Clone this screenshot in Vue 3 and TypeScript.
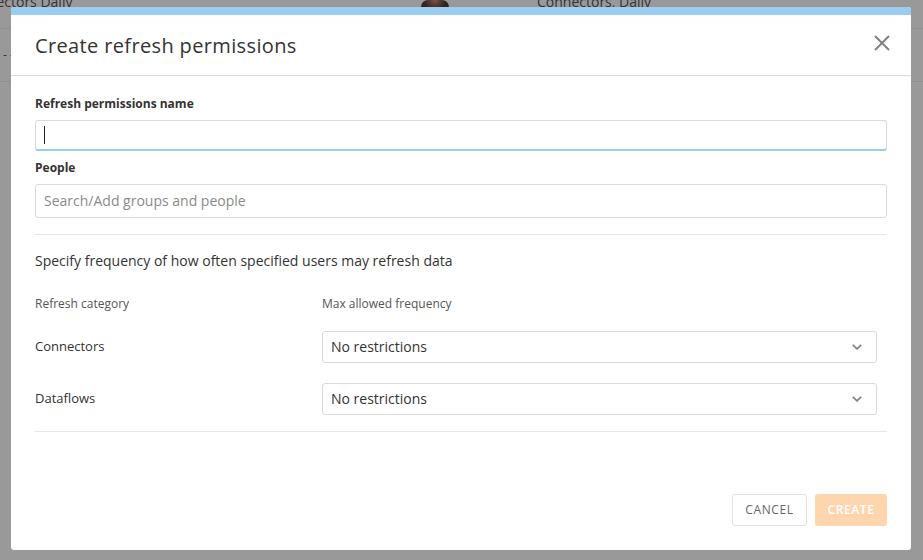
<script setup lang="ts">
const rows: { label: string; value: string }[] = [
  { label: 'Connectors', value: 'No restrictions' },
  { label: 'Dataflows', value: 'No restrictions' },
]
</script>

<template>
  <div class="page">
    <div class="backdrop">
      <div class="bg-row bg-first">
        <span class="bg-a">Connectors Daily</span>
        <span class="avatar"></span>
        <span class="bg-b">Connectors, Daily</span>
      </div>
      <div class="bg-row bg-second"><span class="dash">- -</span></div>
    </div>
    <div class="modal">
      <div class="accent"></div>
      <header class="head">
        <h1 class="title">Create refresh permissions</h1>
        <svg class="close" width="16" height="16" viewBox="0 0 16 16" aria-hidden="true">
          <path d="M1 1 L15 15 M15 1 L1 15" stroke="#7f7f7f" stroke-width="1.9" fill="none" />
        </svg>
      </header>
      <div class="body">
        <label class="label first">Refresh permissions name</label>
        <div class="input focused"><span class="caret"></span></div>
        <label class="label second">People</label>
        <div class="input"><span class="placeholder">Search/Add groups and people</span></div>
        <div class="rule rule-a"></div>
        <p class="lead">Specify frequency of how often specified users may refresh data</p>
        <div class="grid-head">
          <span>Refresh category</span>
          <span>Max allowed frequency</span>
        </div>
        <div v-for="row in rows" :key="row.label" class="grid-row">
          <span class="row-label">{{ row.label }}</span>
          <div class="select">
            <span class="value">{{ row.value }}</span>
            <svg class="chev" width="10" height="6" viewBox="0 0 10 6" aria-hidden="true">
              <path d="M0.8 0.8 L5 4.8 L9.2 0.8" stroke="#7f7f7f" stroke-width="1.6" fill="none" />
            </svg>
          </div>
        </div>
        <div class="rule rule-b"></div>
      </div>
      <footer class="foot">
        <button class="btn cancel" type="button">CANCEL</button>
        <button class="btn create" type="button">CREATE</button>
      </footer>
    </div>
  </div>
</template>

<style>
html, body { margin: 0; padding: 0; background: #999; }
</style>

<style scoped>
.page {
  position: relative;
  width: 923px;
  height: 560px;
  overflow: hidden;
  background: #999;
  font-family: "Open Sans", "Liberation Sans", sans-serif;
  color: #333;
}
.backdrop { position: relative; height: 100%; }
.bg-row { border-bottom: 1px solid #8f8f8f; box-sizing: border-box; font-size: 14px; color: #333; }
.bg-first { height: 29px; display: flex; position: relative; }
.bg-second { height: 53px; display: flex; align-items: center; }
.bg-a { margin: -8px 0 0 -38px; width: 459px; white-space: nowrap; }
.avatar {
  width: 28px;
  height: 7px;
  background: radial-gradient(circle at 50% 0, #7a5548 0, #5a3d33 30%, #2c2523 70%);
  border-radius: 11px 11px 0 0;
  margin-right: 88px;
}
.bg-b { margin-top: -8px; white-space: nowrap; }
.dash { margin: -2px 0 0 3px; font-size: 12px; }
.modal {
  position: absolute;
  left: 11px;
  top: 7px;
  width: 900px;
  height: 543px;
  background: #fff;
  border-radius: 3px;
  overflow: hidden;
  display: flex;
  flex-direction: column;
}
.accent { height: 8px; background: #99ccee; flex: none; }
.head {
  height: 60px;
  flex: none;
  box-sizing: content-box;
  border-bottom: 1px solid #d9d9d9;
  display: flex;
  align-items: center;
  justify-content: space-between;
  padding: 0 21px 0 24px;
}
.title { margin: 0; font-size: 20px; letter-spacing: 0.36px; font-weight: 400; color: #333; line-height: 28px; position: relative; top: 1px; }
.close { flex: none; margin-bottom: 4px; }
.body { padding: 0 24px; flex: 1; display: flex; flex-direction: column; }
.label { font-size: 12px; font-weight: 700; color: #333; line-height: 16px; display: block; }
.label.first { margin-top: 20px; margin-bottom: 8px; }
.label.second { margin-top: 9px; margin-bottom: 8px; }
.input {
  width: 852px;
  height: 34px;
  box-sizing: border-box;
  border: 1px solid #d9d9d9;
  border-radius: 3px;
  padding: 0 8px 2px;
  display: flex;
  align-items: center;
  font-size: 14px;
  flex: none;
}
.input.focused { height: 31px; border-bottom: 2px solid #99ccee; padding-bottom: 0; }
.caret { width: 1px; height: 18px; background: #222; }
.placeholder { color: #8a8a8a; }
.rule { width: 852px; height: 1px; background: #e6e6e6; flex: none; }
.rule-a { margin-top: 16px; }
.lead { margin: 16px 0 0; font-size: 14px; line-height: 20px; color: #333; }
.grid-head {
  display: grid;
  grid-template-columns: 287px 1fr;
  margin-top: 24px;
  font-size: 12px;
  line-height: 18px;
  color: #555;
}
.grid-row {
  display: grid;
  grid-template-columns: 287px 555px;
  align-items: center;
  margin-top: 20px;
  font-size: 13px;
  color: #333;
}
.grid-head + .grid-row { margin-top: 18px; }
.row-label { position: relative; top: -1px; }
.select {
  height: 32px;
  box-sizing: border-box;
  border: 1px solid #d9d9d9;
  border-radius: 3px;
  padding: 0 14px 0 8px;
  display: flex;
  align-items: center;
  justify-content: space-between;
  font-size: 14px;
}
.chev { margin-top: 0; }
.value { position: relative; top: -1px; }
.rule-b { margin-top: 16px; }
.foot {
  flex: none;
  display: flex;
  justify-content: flex-end;
  gap: 8px;
  padding: 0 24px 24px;
}
.btn {
  height: 32px;
  box-sizing: border-box;
  border-radius: 3px;
  font-family: inherit;
  font-size: 12px;
  letter-spacing: 0.6px;
  padding: 0 0 2px;
  font-weight: 400;
}
.cancel { width: 75px; background: #fff; border: 1px solid #e3e3e3; color: #666; }
.create { width: 72px; background: #ffd5ad; border: none; color: #fff; font-weight: 600; }
</style>
